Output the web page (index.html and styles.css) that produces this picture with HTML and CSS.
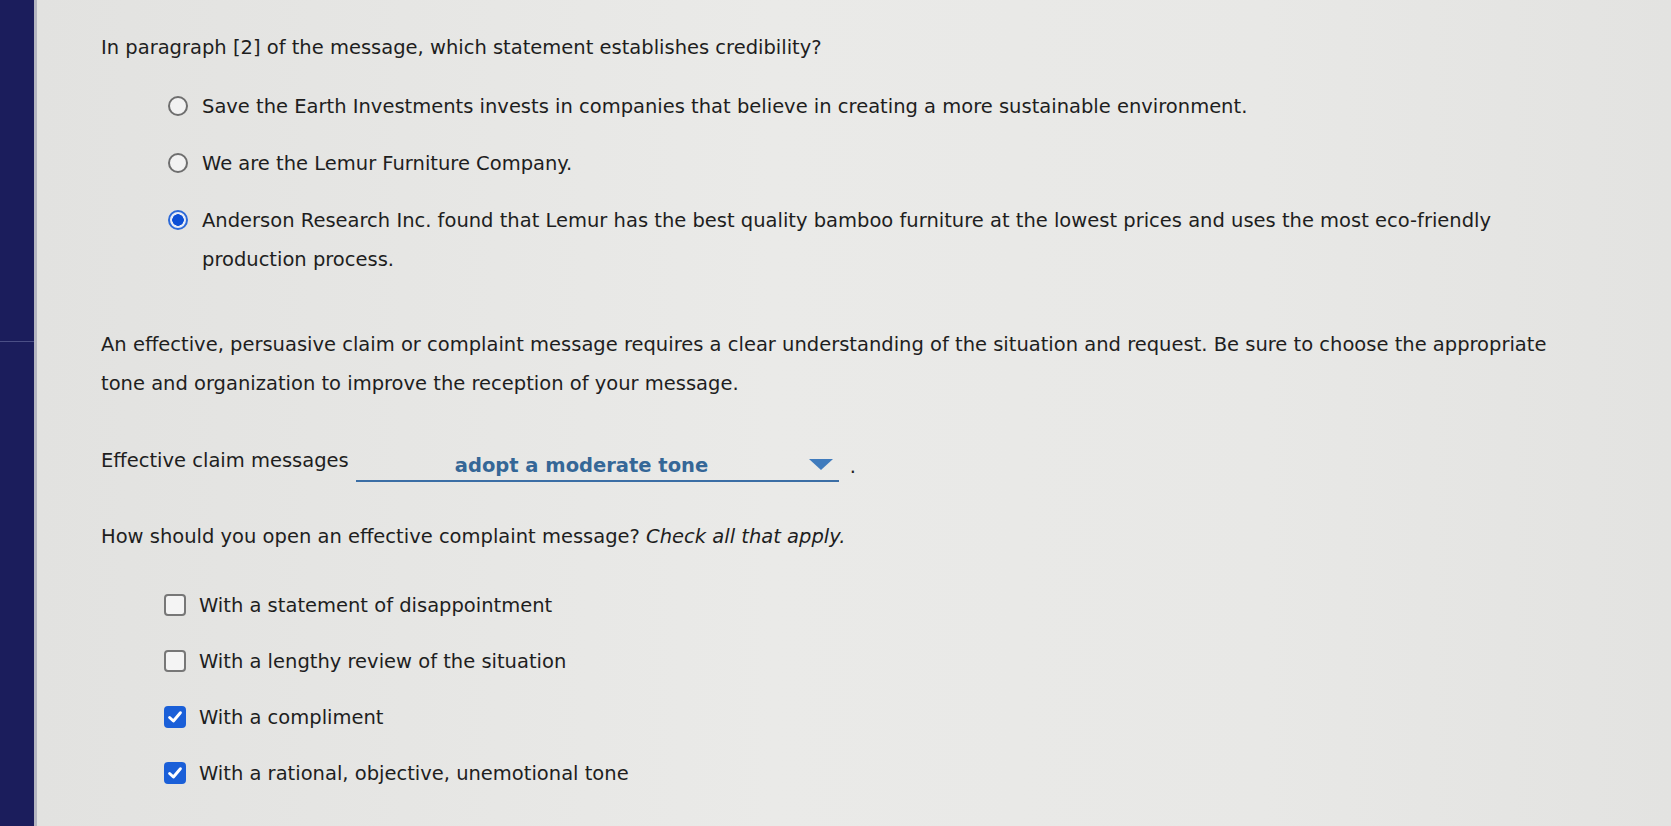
FILE: index.html
```html
<!DOCTYPE html>
<html>
<head>
<meta charset="utf-8">
<link rel="stylesheet" href="styles.css">
</head>
<body>
<div class="page">
  <aside class="sidebar"><div class="sidebar-line"></div></aside>
  <main class="content">
    <p class="question">In paragraph [2] of the message, which statement establishes credibility?</p>
    <ul class="options radios">
      <li class="opt"><span class="radio"></span><span class="label">Save the Earth Investments invests in companies that believe in creating a more sustainable environment.</span></li>
      <li class="opt"><span class="radio"></span><span class="label">We are the Lemur Furniture Company.</span></li>
      <li class="opt"><span class="radio checked"></span><span class="label">Anderson Research Inc. found that Lemur has the best quality bamboo furniture at the lowest prices and uses the most eco-friendly production process.</span></li>
    </ul>
    <p class="para">An effective, persuasive claim or complaint message requires a clear understanding of the situation and request. Be sure to choose the appropriate tone and organization to improve the reception of your message.</p>
    <div class="fill">
      <span>Effective claim messages</span>
      <span class="select"><span class="select-text">adopt a moderate tone</span><svg class="caret" width="24" height="12" viewBox="0 0 24 12"><path d="M0 0H24L12 11Z" fill="#3f7bbd"/></svg></span>
      <span class="dot">.</span>
    </div>
    <p class="question q2">How should you open an effective complaint message? <em>Check all that apply.</em></p>
    <ul class="options checks">
      <li class="opt"><span class="box"></span><span class="label">With a statement of disappointment</span></li>
      <li class="opt"><span class="box"></span><span class="label">With a lengthy review of the situation</span></li>
      <li class="opt"><span class="box checked"><svg width="18" height="18" viewBox="0 0 16 16"><path d="M3.2 8.4L6.6 11.6L12.8 4.2" stroke="#fff" stroke-width="2.6" fill="none" stroke-linecap="round" stroke-linejoin="round"/></svg></span><span class="label">With a compliment</span></li>
      <li class="opt"><span class="box checked"><svg width="18" height="18" viewBox="0 0 16 16"><path d="M3.2 8.4L6.6 11.6L12.8 4.2" stroke="#fff" stroke-width="2.6" fill="none" stroke-linecap="round" stroke-linejoin="round"/></svg></span><span class="label">With a rational, objective, unemotional tone</span></li>
    </ul>
  </main>
</div>
</body>
</html>
```
FILE: styles.css
```css
html, body {
  margin: 0;
  padding: 0;
  height: 100%;
}
body {
  background: #e4e4e2;
  font-family: "DejaVu Sans", Verdana, sans-serif;
  color: #1e1e1e;
  overflow: hidden;
}
.page {
  display: flex;
  height: 826px;
}
.sidebar {
  width: 34px;
  flex: none;
  background: #1b1d5c;
  border-right: 3px solid #b4b5c0;
  position: relative;
}
.sidebar-line {
  position: absolute;
  left: 0;
  right: 0;
  top: 341px;
  height: 1px;
  background: #4b4f86;
}
.content {
  flex: 1;
  padding: 28px 0 0 64px;
  background: linear-gradient(90deg, #e2e2e0 0%, #eaeae8 45%, #e8e8e6 75%, #e3e3e1 100%);
  font-size: 19.5px;
  line-height: 39px;
}
p { margin: 0; }
.options {
  list-style: none;
  margin: 0;
  padding: 0;
}
.radios {
  margin: 20px 0 0 67px;
  display: flex;
  flex-direction: column;
  gap: 18px;
}
.radios .label {
  max-width: 1340px;
}
.opt {
  display: flex;
  align-items: flex-start;
}
.radio {
  flex: none;
  width: 20px;
  height: 20px;
  border: 2px solid #6e6e6e;
  border-radius: 50%;
  margin: 9px 14px 0 0;
  box-sizing: border-box;
  background: #f2f2f2;
}
.radio.checked {
  border: 2px solid #2d6ad8;
  background: radial-gradient(circle, #0c4fd6 0 5.5px, #e8ecf6 6px);
}
.para {
  margin-top: 46px;
  width: 1475px;
}
.fill {
  margin-top: 38px;
  display: flex;
  align-items: flex-end;
}
.select {
  margin-left: 7px;
  width: 483px;
  height: 34px;
  border-bottom: 2px solid #3b6ea5;
  display: flex;
  align-items: flex-end;
  justify-content: flex-end;
  position: relative;
  margin-bottom: -2px;
}
.select-text {
  position: absolute;
  left: 99px;
  bottom: -5px;
  font-weight: bold;
  color: #356797;
}
.caret {
  margin: 0 6px 9px 0;
}
.dot {
  margin-left: 11px;
  position: relative;
  top: 6px;
}
.q2 {
  margin-top: 37px;
}
.checks {
  margin: 30px 0 0 63px;
  display: flex;
  flex-direction: column;
  gap: 17px;
}
.box {
  flex: none;
  width: 22px;
  height: 22px;
  border: 2px solid #777;
  border-radius: 4px;
  box-sizing: border-box;
  background: #f4f4f4;
  margin: 8px 13px 0 0;
  display: flex;
  align-items: center;
  justify-content: center;
}
.box.checked {
  background: #1a5fd8;
  border-color: #1a5fd8;
}
```
